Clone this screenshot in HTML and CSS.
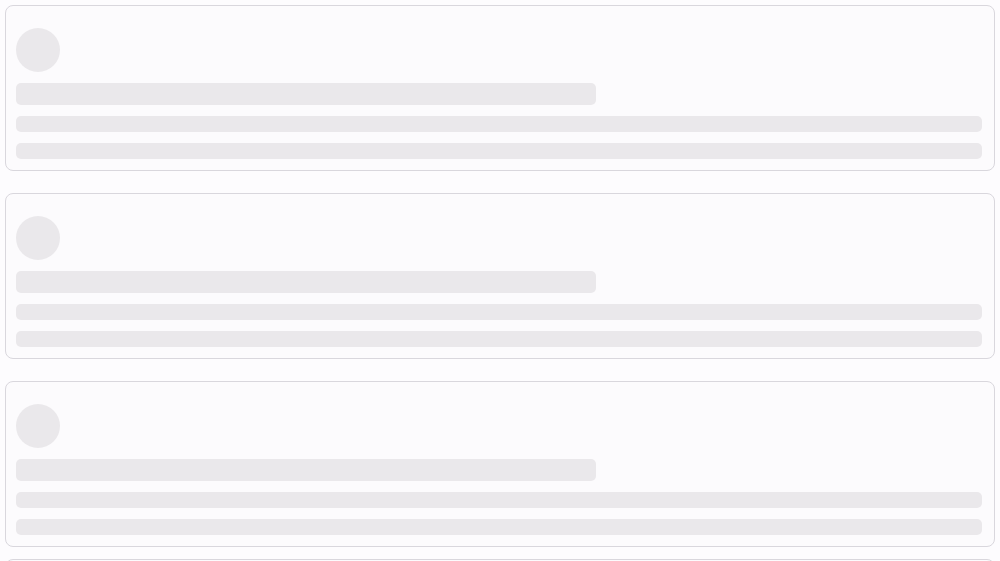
FILE: index.html
```html
<!DOCTYPE html>
<html>
<head>
<meta charset="utf-8">
<link rel="stylesheet" href="styles.css">
</head>
<body>
<div class="list">
  <div class="card">
    <div class="head"><div class="avatar"></div></div>
    <div class="bar title"></div>
    <div class="bar line"></div>
    <div class="bar line"></div>
  </div>
  <div class="card">
    <div class="head"><div class="avatar"></div></div>
    <div class="bar title"></div>
    <div class="bar line"></div>
    <div class="bar line"></div>
  </div>
  <div class="card">
    <div class="head"><div class="avatar"></div></div>
    <div class="bar title"></div>
    <div class="bar line"></div>
    <div class="bar line"></div>
  </div>
  <div class="card card-next">
    <div class="head"><div class="avatar"></div></div>
    <div class="bar title"></div>
    <div class="bar line"></div>
    <div class="bar line"></div>
  </div>
</div>
</body>
</html>
```
FILE: styles.css
```css
html, body {
  margin: 0;
  padding: 0;
  background: #fdfcfe;
  font-family: "Liberation Sans", Arial, sans-serif;
  overflow: hidden;
}
.list {
  display: flex;
  flex-direction: column;
  gap: 22px;
  padding: 5px 5px 0 5px;
}
.card {
  background: #fcfbfd;
  border: 1px solid #d9d7dd;
  border-radius: 8px;
  padding: 22px 12px 11px 10px;
  display: flex;
  flex-direction: column;
  gap: 11px;
}
.card-next {
  margin-top: -10px;
}
.head {
  display: flex;
  align-items: center;
}
.avatar {
  width: 44px;
  height: 44px;
  border-radius: 50%;
  background: #eae8eb;
}
.bar {
  background: #eae8eb;
  border-radius: 5px;
}
.title {
  width: 580px;
  height: 22px;
}
.line {
  height: 16px;
}
```
